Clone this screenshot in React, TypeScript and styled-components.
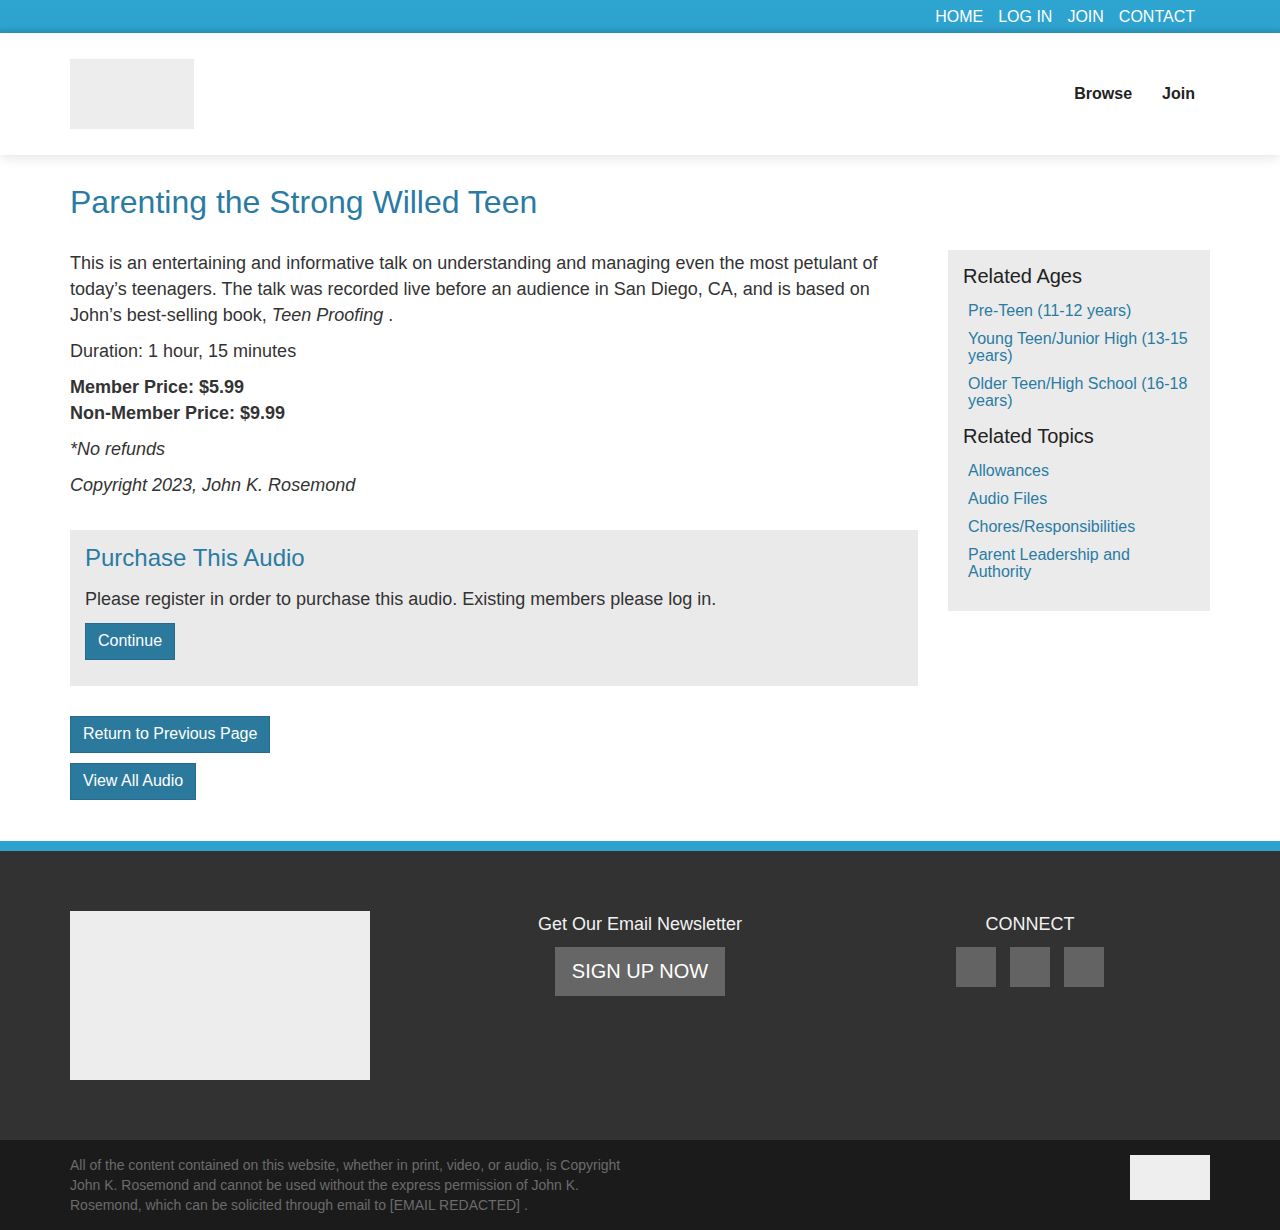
import React from 'react';
import styled, { createGlobalStyle } from 'styled-components';

const GlobalStyle = createGlobalStyle`
  * { box-sizing: border-box; }
  body {
    margin: 0;
    font-family: "Liberation Sans", Arial, sans-serif;
    color: #333;
    background: #fff;
  }
  p { margin: 0; }
`;

const topLinks = ['HOME', 'LOG IN', 'JOIN', 'CONTACT'];
const ages = ['Pre-Teen (11-12 years)', 'Young Teen/Junior High (13-15 years)', 'Older Teen/High School (16-18 years)'];
const topics = ['Allowances', 'Audio Files', 'Chores/Responsibilities', 'Parent Leadership and Authority'];

const App = (): JSX.Element => {
  return (
    <>
      <GlobalStyle />
      <TopBar>
        <Container>
          <TopNav>
            {topLinks.map((l) => (
              <TopLink key={l}>{l}</TopLink>
            ))}
          </TopNav>
        </Container>
      </TopBar>
      <Header>
        <HeaderInner>
          <LogoBox />
          <MainNav>
            <MainLink>Browse</MainLink>
            <MainLink>Join</MainLink>
          </MainNav>
        </HeaderInner>
      </Header>

      <Container>
        <Title>Parenting the Strong Willed Teen</Title>
        <Columns>
          <MainCol>
            <BodyText>
              This is an entertaining and informative talk on understanding and managing even the most petulant of
              today’s teenagers. The talk was recorded live before an audience in San Diego, CA, and is based on
              John’s best-selling book, <em>Teen Proofing</em>&nbsp;.
            </BodyText>
            <BodyText>Duration: 1 hour, 15 minutes</BodyText>
            <BodyText>
              <strong>Member Price: $5.99</strong>
              <br />
              <strong>Non-Member Price: $9.99</strong>
            </BodyText>
            <BodyText>
              <em>*No refunds</em>
            </BodyText>
            <BodyText>
              <em>Copyright 2023, John K. Rosemond</em>
            </BodyText>

            <PurchaseBox>
              <PurchaseTitle>Purchase This Audio</PurchaseTitle>
              <PurchaseText>Please register in order to purchase this audio. Existing members please log in.</PurchaseText>
              <Button>Continue</Button>
            </PurchaseBox>

            <ButtonStack>
              <Button>Return to Previous Page</Button>
              <Button>View All Audio</Button>
            </ButtonStack>
          </MainCol>

          <Sidebar>
            <SideHeading>Related Ages</SideHeading>
            <SideList>
              {ages.map((a) => (
                <SideLink key={a}>{a}</SideLink>
              ))}
            </SideList>
            <SideHeading>Related Topics</SideHeading>
            <SideList>
              {topics.map((t) => (
                <SideLink key={t}>{t}</SideLink>
              ))}
            </SideList>
          </Sidebar>
        </Columns>
      </Container>

      <Footer>
        <FooterInner>
          <FooterLogo />
          <FooterCol>
            <FooterHeading>Get Our Email Newsletter</FooterHeading>
            <SignUp>SIGN UP NOW</SignUp>
          </FooterCol>
          <FooterCol>
            <FooterHeading>CONNECT</FooterHeading>
            <Socials>
              <Social />
              <Social />
              <Social />
            </Socials>
          </FooterCol>
        </FooterInner>
      </Footer>
      <BottomBar>
        <BottomInner>
          <Legal>
            All of the content contained on this website, whether in print, video, or audio, is Copyright John K.
            Rosemond and cannot be used without the express permission of John K. Rosemond, which can be solicited
            through email to [EMAIL REDACTED] .
          </Legal>
          <SmallBadge />
        </BottomInner>
      </BottomBar>
    </>
  );
};

export default App;

const Container = styled.div`
  width: 1140px;
  margin: 0 auto;
`;

const TopBar = styled.div`
  height: 33px;
  background: linear-gradient(to bottom, #2ea4d0 0%, #2ea3cf 80%, #2a93bb 100%);
`;

const TopNav = styled.nav`
  display: flex;
  justify-content: flex-end;
  gap: 15px;
  padding-right: 15px;
  height: 33px;
  align-items: center;
`;

const TopLink = styled.a`
  color: #fff;
  font-size: 16px;
  line-height: 1;
`;

const Header = styled.header`
  height: 122px;
  background: #fff;
  box-shadow: 0 3px 12px rgba(0, 0, 0, 0.1);
  position: relative;
`;

const HeaderInner = styled(Container)`
  display: flex;
  align-items: center;
  justify-content: space-between;
  height: 100%;
`;

const LogoBox = styled.div`
  width: 124px;
  height: 70px;
  background: #ededed;
`;

const MainNav = styled.nav`
  display: flex;
  gap: 30px;
  padding-right: 15px;
`;

const MainLink = styled.a`
  font-size: 16px;
  font-weight: bold;
  color: #222;
`;

const Title = styled.h1`
  margin: 28px 0 29px;
  font-size: 32px;
  font-weight: normal;
  line-height: 38px;
  color: #2a7ba3;
`;

const Columns = styled.div`
  display: flex;
  gap: 30px;
  align-items: flex-start;
`;

const MainCol = styled.div`
  width: 848px;
`;

const BodyText = styled.p`
  font-size: 18px;
  line-height: 26px;
  color: #333;
  margin-bottom: 10px;
`;

const PurchaseText = styled(BodyText)`
  margin-bottom: 11px;
`;

const PurchaseBox = styled.div`
  margin-top: 32px;
  background: #eaeaea;
  padding: 12px 15px 26px;
`;

const PurchaseTitle = styled.h3`
  margin: 0 0 12px;
  font-size: 24px;
  font-weight: normal;
  line-height: 32px;
  color: #2a7ba3;
`;

const Button = styled.button`
  display: inline-block;
  background: #2b7a9e;
  color: #fff;
  font-family: "Liberation Sans", Arial, sans-serif;
  font-size: 16px;
  line-height: 20px;
  padding: 7px 12px 8px;
  border: 1px solid #246b8c;
  border-radius: 0;
  cursor: pointer;
`;

const ButtonStack = styled.div`
  margin-top: 30px;
  display: flex;
  flex-direction: column;
  align-items: flex-start;
  gap: 10px;
`;

const Sidebar = styled.aside`
  width: 262px;
  background: #ebebeb;
  padding: 13px 15px 31px;
`;

const SideHeading = styled.h4`
  margin: 0 0 13px;
  font-size: 20px;
  font-weight: normal;
  line-height: 26px;
  color: #222;
`;

const SideList = styled.div`
  display: flex;
  flex-direction: column;
  gap: 11px;
  padding-left: 5px;
  margin-bottom: 14px;

  &:last-child {
    margin-bottom: 0;
  }
`;

const SideLink = styled.a`
  font-size: 16px;
  line-height: 17px;
  color: #2a7ba3;
`;

const Footer = styled.footer`
  margin-top: 41px;
  border-top: 10px solid #2ea3cf;
  background: #323232;
  padding: 60px 0;
`;

const FooterInner = styled(Container)`
  display: grid;
  grid-template-columns: 360px 360px 360px;
  column-gap: 30px;
`;

const FooterLogo = styled.div`
  width: 300px;
  height: 169px;
  background: #ededed;
`;

const FooterCol = styled.div`
  display: flex;
  flex-direction: column;
  align-items: center;
`;

const FooterHeading = styled.h4`
  margin: 1px 0 11px;
  font-size: 18px;
  font-weight: normal;
  line-height: 24px;
  color: #f2f2f2;
`;

const SignUp = styled.button`
  background: #666;
  color: #fff;
  border: none;
  font-family: "Liberation Sans", Arial, sans-serif;
  font-size: 20px;
  line-height: 24px;
  padding: 12px 17px 13px;
  border-radius: 0;
`;

const Socials = styled.div`
  display: flex;
  gap: 14px;
`;

const Social = styled.a`
  display: block;
  width: 40px;
  height: 40px;
  background: #636363;
`;

const BottomBar = styled.div`
  background: #1b1b1b;
  padding: 15px 0;
  height: 90px;
`;

const BottomInner = styled(Container)`
  display: flex;
  justify-content: space-between;
  align-items: flex-start;
`;

const Legal = styled.p`
  width: 555px;
  font-size: 14px;
  line-height: 20px;
  color: #6b6b6b;
`;

const SmallBadge = styled.div`
  width: 80px;
  height: 45px;
  background: #eee;
`;
